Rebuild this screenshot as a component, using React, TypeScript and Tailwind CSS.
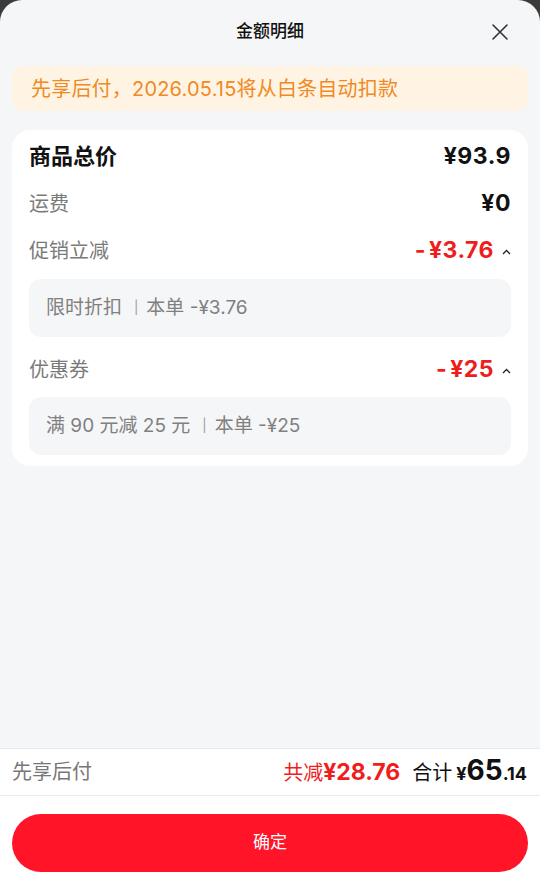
const font = { fontFamily: 'Inter, "Noto Sans CJK SC", "Noto Sans", sans-serif' }

function Caret() {
  return (
    <svg width="9" height="6" viewBox="0 0 9 6" className="ml-[8px] mt-[2px]">
      <path d="M1 5 L4.5 1.5 L8 5" fill="none" stroke="#222" strokeWidth="1.3" />
    </svg>
  )
}

function Discount({ value }: { value: string }) {
  return (
    <span className="flex items-center text-[23px] font-bold tracking-[0.5px] text-[#f01d1d]">
      <span className="mr-[3px]">-</span>
      <span>¥{value}</span>
      <Caret />
    </span>
  )
}

function DetailBox({ left, right }: { left: string; right: string }) {
  return (
    <div className="h-[58px] rounded-[12px] bg-[#f5f6f8] flex items-center px-[17px] text-[19px] text-[#808080]">
      <span>{left}</span>
      <span className="ml-[12px] mr-[8px] text-[13px] text-[#999]">|</span>
      <span>{right}</span>
    </div>
  )
}

export default function App() {
  return (
    <div className="w-[540px] h-[889px] bg-[#3b3b3b] overflow-hidden" style={font}>
      <div className="h-full flex flex-col bg-[#f5f6f8] rounded-t-[22px] overflow-hidden">
        {/* Header */}
        <div className="relative h-[64px] flex items-center justify-center shrink-0">
          <span className="text-[17px] font-medium text-[#111]">金额明细</span>
          <svg width="18" height="18" viewBox="0 0 18 18" className="absolute right-[31px] top-[23px]">
            <path d="M2 2 L16 16 M16 2 L2 16" stroke="#333" strokeWidth="1.6" strokeLinecap="round" />
          </svg>
        </div>

        {/* Notice */}
        <div className="mx-[12px] mt-[2px] h-[45px] rounded-[10px] bg-[#fff3e4] flex items-center px-[19px] text-[20px] tracking-[0.2px] text-[#f08a22]">
          先享后付，2026.05.15将从白条自动扣款
        </div>

        {/* Card */}
        <div className="mx-[12px] mt-[19px] rounded-[18px] bg-white px-[17px] pt-[3px] pb-[11px]">
          <div className="h-[47px] flex items-center justify-between">
            <span className="text-[22px] font-bold text-[#111]">商品总价</span>
            <span className="text-[23px] font-bold tracking-[0.5px] text-[#111]">¥93.9</span>
          </div>
          <div className="h-[47px] flex items-center justify-between">
            <span className="text-[20px] text-[#7a7a7a]">运费</span>
            <span className="text-[23px] font-bold tracking-[0.5px] text-[#111]">¥0</span>
          </div>
          <div className="h-[47px] flex items-center justify-between">
            <span className="text-[20px] text-[#7a7a7a]">促销立减</span>
            <Discount value="3.76" />
          </div>
          <div className="mt-[5px]">
            <DetailBox left="限时折扣" right="本单 -¥3.76" />
          </div>
          <div className="mt-[9px] h-[47px] flex items-center justify-between">
            <span className="text-[20px] text-[#7a7a7a]">优惠券</span>
            <Discount value="25" />
          </div>
          <div className="mt-[4px]">
            <DetailBox left="满 90 元减 25 元" right="本单 -¥25" />
          </div>
        </div>

        <div className="flex-1" />

        {/* Bottom bar */}
        <div className="h-[48px] shrink-0 bg-white border-y border-[#e9e9eb] flex items-center justify-between pl-[12px] pr-[13px]">
          <span className="text-[20px] text-[#777]">先享后付</span>
          <div className="flex items-baseline">
            <span className="text-[20px] text-[#f01d1d]">共减</span>
            <span className="text-[23px] font-bold text-[#f01d1d]">¥28.76</span>
            <span className="ml-[12px] text-[20px] text-[#111]">合计</span>
            <span className="ml-[4px] text-[18px] font-bold text-[#111]">¥</span>
            <span className="text-[28px] font-bold text-[#111] leading-none">65</span>
            <span className="text-[18px] font-bold text-[#111]">.14</span>
          </div>
        </div>

        {/* Confirm */}
        <div className="h-[93px] shrink-0 bg-white px-[12px] pt-[18px]">
          <button className="w-full h-[58px] rounded-full bg-[#ff1428] text-white text-[17px] font-normal">
            确定
          </button>
        </div>
      </div>
    </div>
  )
}
